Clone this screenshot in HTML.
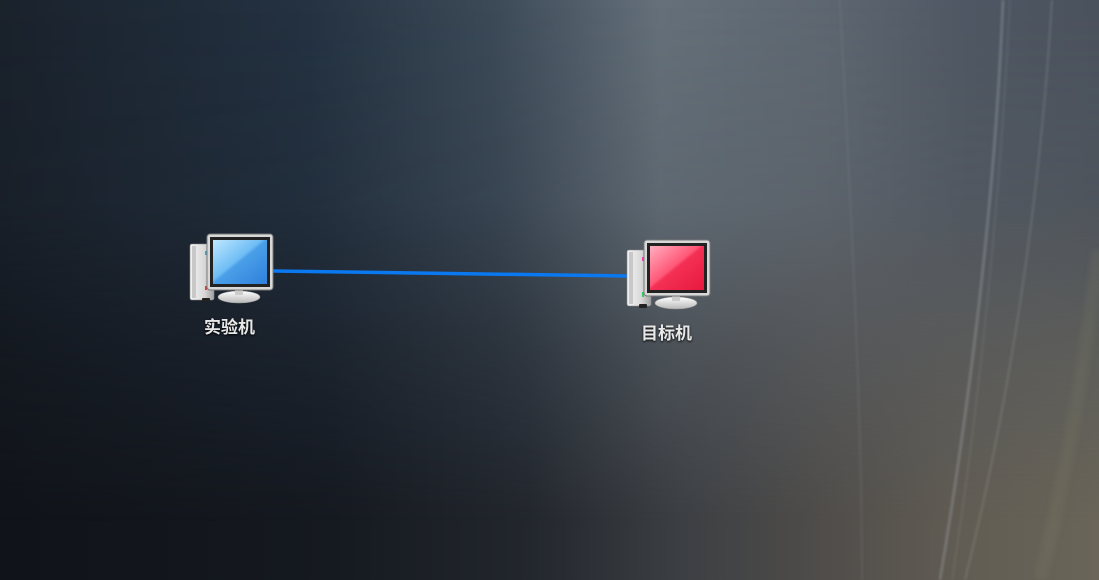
<!DOCTYPE html>
<html><head><meta charset="utf-8"><style>
html,body{margin:0;padding:0;width:1099px;height:580px;overflow:hidden;background:#15181e}
.bg{position:absolute;left:0;top:0;width:1099px;height:580px}
#b{background:linear-gradient(to right,#101319 0%,#151920 30%,#22262d 48%,#3c3f43 62%,#504d4a 75%,#625d54 88%,#6a6558 100%)}
#t{background:linear-gradient(to right,#1a222c 0%,#243242 28%,#3c4a58 45%,#65707a 60%,#5e6771 75%,#4e5763 88%,#4a525d 100%);-webkit-mask-image:linear-gradient(to bottom,#000 0%,rgba(0,0,0,.85) 35%,rgba(0,0,0,.4) 60%,transparent 90%);mask-image:linear-gradient(to bottom,#000 0%,rgba(0,0,0,.85) 35%,rgba(0,0,0,.4) 60%,transparent 90%)}
.lbl{position:absolute;font-family:"Liberation Sans","Noto Sans CJK SC",sans-serif;font-size:17px;font-weight:bold;color:#e8e8e8;text-shadow:0 1px 2px #000;white-space:nowrap}
</style></head><body>
<div class="bg" id="b"></div>
<div class="bg" id="t"></div>
<svg class="bg" width="1099" height="580" viewBox="0 0 1099 580">
<defs>
<linearGradient id="blue" x1="0" y1="0" x2="1" y2="1"><stop offset="0" stop-color="#bfe8ff"/><stop offset=".45" stop-color="#6fbdf5"/><stop offset=".5" stop-color="#4a9fe8"/><stop offset="1" stop-color="#2f7fdc"/></linearGradient>
<linearGradient id="red" x1="0" y1="0" x2="1" y2="1"><stop offset="0" stop-color="#ffb0c0"/><stop offset=".45" stop-color="#ff5878"/><stop offset=".5" stop-color="#f43055"/><stop offset="1" stop-color="#e8183e"/></linearGradient>
<linearGradient id="tower" x1="0" y1="0" x2="1" y2="0"><stop offset="0" stop-color="#f4f4f4"/><stop offset=".6" stop-color="#d8d8d8"/><stop offset="1" stop-color="#a0a0a0"/></linearGradient>
<linearGradient id="base" x1="0" y1="0" x2="0" y2="1"><stop offset="0" stop-color="#ffffff"/><stop offset="1" stop-color="#b8b8b8"/></linearGradient>
<filter id="soft"><feGaussianBlur stdDeviation="1.2"/></filter>
<filter id="soft3"><feGaussianBlur stdDeviation="3"/></filter>
</defs>
<g fill="none" filter="url(#soft)">
<path d="M1003 0 C995 200 970 400 940 580" stroke="#b8c0c8" stroke-width="2" opacity=".4"/>
<path d="M1010 0 C1000 200 980 400 952 580" stroke="#a0a8a0" stroke-width="1.5" opacity=".2"/>
<path d="M1052 0 C1040 200 1010 400 965 580" stroke="#b0b4a8" stroke-width="1.5" opacity=".3"/>
<path d="M840 0 C850 200 862 400 862 580" stroke="#8a9098" stroke-width="2" opacity=".2"/>
</g>
<path d="M1099 250 C1080 400 1060 500 1040 580" stroke="#8a8a70" stroke-width="14" fill="none" opacity=".15" filter="url(#soft3)"/>
<line x1="273" y1="271" x2="628" y2="276" stroke="#0a78f0" stroke-width="3.5"/>
<g transform="translate(190,234)">
<rect x="0" y="10" width="24" height="56" rx="2" fill="url(#tower)" stroke="#888" stroke-width=".6"/>
<rect x="2" y="12" width="4" height="52" fill="#c8c8c8"/>
<rect x="15" y="17" width="2" height="4" fill="#3ac"/>
<rect x="15" y="52" width="2" height="4" fill="#c44"/>
<rect x="12" y="64" width="8" height="4" rx="1" fill="#222"/>
<ellipse cx="49" cy="63" rx="21" ry="6" fill="url(#base)" stroke="#999" stroke-width=".6"/>
<rect x="45" y="54" width="8" height="7" fill="#ccc"/>
<rect x="17" y="0" width="66" height="56" rx="3" fill="#d8d8d8" stroke="#777"/>
<rect x="20" y="3" width="60" height="50" fill="#222"/>
<rect x="23" y="6" width="54" height="44" fill="url(#blue)"/>
</g>
<g transform="translate(627,240)">
<rect x="0" y="10" width="24" height="56" rx="2" fill="url(#tower)" stroke="#888" stroke-width=".6"/>
<rect x="2" y="12" width="4" height="52" fill="#c8c8c8"/>
<rect x="15" y="17" width="2" height="4" fill="#e4a"/>
<rect x="15" y="52" width="2" height="5" fill="#3c6"/>
<rect x="12" y="64" width="8" height="4" rx="1" fill="#222"/>
<ellipse cx="49" cy="63" rx="21" ry="6" fill="url(#base)" stroke="#999" stroke-width=".6"/>
<rect x="45" y="54" width="8" height="7" fill="#ccc"/>
<rect x="17" y="0" width="66" height="56" rx="3" fill="#d8d8d8" stroke="#777"/>
<rect x="20" y="3" width="60" height="50" fill="#222"/>
<rect x="23" y="6" width="54" height="44" fill="url(#red)"/>
</g>
</svg>
<div class="lbl" style="left:204px;top:313px">实验机</div>
<div class="lbl" style="left:641px;top:319px">目标机</div>
</body></html>
